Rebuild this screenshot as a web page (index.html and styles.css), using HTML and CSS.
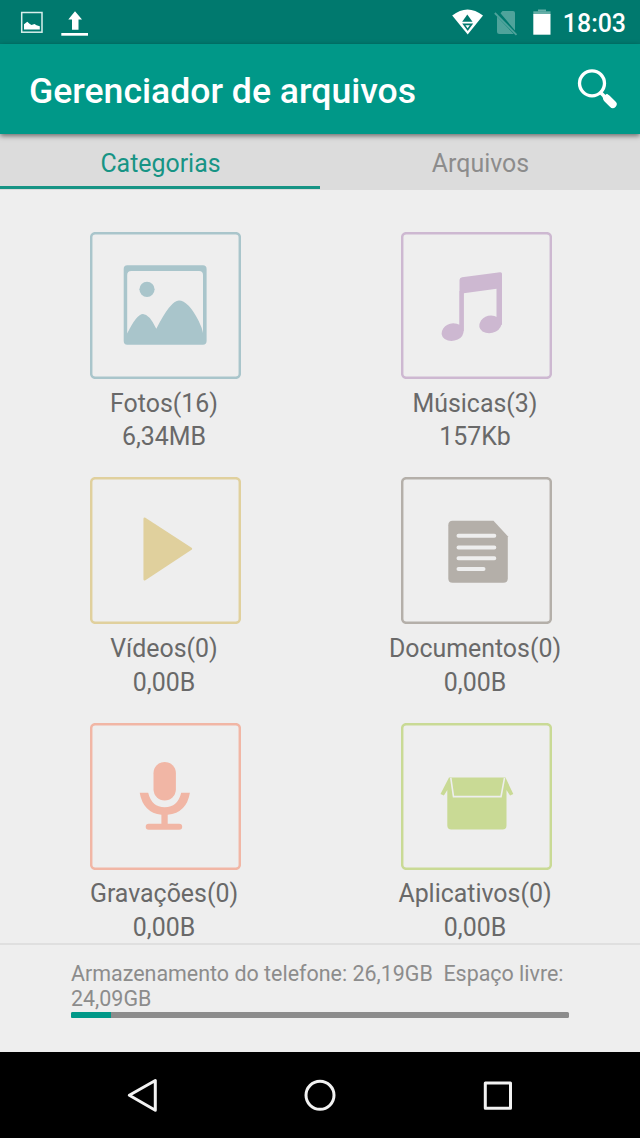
FILE: index.html
```html
<!DOCTYPE html>
<html lang="pt-BR">
<head>
<meta charset="utf-8">
<title>Gerenciador de arquivos</title>
<link rel="stylesheet" href="styles.css">
</head>
<body>
<div class="screen">
  <div class="status-bar">
    <svg class="status-icons" viewBox="0 0 100 44" width="100" height="44">
      <rect x="21.7" y="12.5" width="20.3" height="19.7" fill="none" stroke="#d9efec" stroke-width="1.5"/>
      <path d="M24 29.500v-5.300l3.300-2.400 2.200 2 2 1.200 3-1 2 1.200 3.300 1v3.300z" fill="#fff"/>
      <path d="M75 11.300l7 8.200h-3.500v10.300h-6.500v-10.300h-3.700z" fill="#fff"/>
      <path d="M61.300 33h26.700v2.700h-26.700z" fill="#fff"/>
    </svg>
    <div class="status-right">
      <svg viewBox="450 0 104 44" width="104" height="44">
        <path d="M452.200 15.500Q467.500 3.500 483 15.500L467.700 34.500z" fill="#fff"/>
        <path d="M467.300 14.500l5.200 7.200h-10.300z" fill="#00796e"/>
        <path d="M462.200 23.500h11l-5.500 7.500z" fill="#00796e"/>
        <path d="M465.400 25.200h4.400l-2.200 3z" fill="#fff"/>
        <path d="M500.500 13.300l2-2.300h10.500q2 0 2 2v17.500zM497 16.500l16.800 17.500h-14.300q-2.500 0-2.500-2.500z" fill="#4fa39b"/>
        <path d="M494.800 13L516.500 34.800" stroke="#4fa39b" stroke-width="1.800"/>
        <path d="M538 9.500h8v2h-8z" fill="#65aea7"/>
        <path d="M533.300 11.300h17.200v3.200h-17.200z" fill="#65aea7"/>
        <path d="M533.300 14h17.200v20.700h-17.200z" fill="#fff"/>
      </svg>
      <span class="clock">18:03</span>
    </div>
  </div>
  <header class="app-bar">
    <h1 class="title">Gerenciador de arquivos</h1>
    <svg viewBox="574 66 46 46" width="46" height="46">
      <circle cx="592" cy="83.300" r="12.500" fill="none" stroke="#fff" stroke-width="3.300"/>
      <path d="M600.500 92.500l4 4" stroke="#fff" stroke-width="3.500"/>
      <path d="M607 98.500l5.800 5.800" stroke="#fff" stroke-width="7.600" stroke-linecap="round"/>
      <path d="M602.500 97.500l4.500-3.800 9.500 9.800-4.800 4.500z" fill="#fff"/>
    </svg>
  </header>
  <nav class="tabs">
    <span class="tab tab-active">Categorias</span>
    <span class="tab">Arquivos</span>
  </nav>
  <main class="grid">
    <section class="item photos">
      <svg class="tile" viewBox="90.300 232 151 147">
        <rect class="frame" x="91.500" y="233.200" width="148.600" height="144.600" rx="4"/>
        <path fill-rule="evenodd" d="M127.500 265.300h75.700q3.700 0 3.700 3.700v72q0 3.700-3.700 3.700h-75.700q-3.500 0-3.500-3.700v-72q0-3.700 3.500-3.700zM131.500 271q-4 0-4 4v58.500Q137 314 143.300 314Q149.500 314 156.600 328.700Q171 300.500 179.200 300.500Q188.500 300.500 199 321Q202.500 328 203.300 333v-58q0-4-4-4z"/>
        <circle cx="147.300" cy="289.300" r="7.600"/>
      </svg>
      <p class="label">Fotos(16)</p><p class="label">6,34MB</p>
    </section>
    <section class="item music">
      <svg class="tile" viewBox="401.500 232 151 147">
        <rect class="frame" x="402.700" y="233.200" width="148.600" height="144.600" rx="4"/>
        <path d="M460 280q0-2.400 2.500-2.800l38-5q2-.2 2 1.500v51h-5.300v-36l-33 4.500v38h-4.200z"/>
        <path d="M460 291h4.200v39q0 7-6 9.500q-7 3-13-.5q-5.500-4.500-1.500-10.500q3.500-5 10-5.200q4 0 6.300 1.500z"/>
        <path d="M497.200 288h5.300v33q0 7-6 10.500q-7 3.500-13.500 0q-5.500-4.500-1.500-11q4-5 10-5q4 0 5.700 1.500z"/>
      </svg>
      <p class="label">Músicas(3)</p><p class="label">157Kb</p>
    </section>
    <section class="item videos">
      <svg class="tile" viewBox="90.300 477.300 151 147">
        <rect class="frame" x="91.500" y="478.500" width="148.600" height="144.600" rx="4"/>
        <path d="M145 519L191.200 549L145 579.500z" stroke="currentColor" stroke-width="2.500" stroke-linejoin="round"/>
      </svg>
      <p class="label">Vídeos(0)</p><p class="label">0,00B</p>
    </section>
    <section class="item documents">
      <svg class="tile" viewBox="401.500 477.300 151 147">
        <rect class="frame" x="402.700" y="478.500" width="148.600" height="144.600" rx="4"/>
        <path d="M453 521h41l14.300 15.500v42q0 4.500-4.500 4.500h-50.800q-4.200 0-4.200-4.500v-53q0-4.500 4.200-4.500z"/>
        <path class="lines" d="M459 536.100h35.800M459 547.900h35.800M459 558.600h35.800M459 569.400h25"/>
      </svg>
      <p class="label">Documentos(0)</p><p class="label">0,00B</p>
    </section>
    <section class="item recordings">
      <svg class="tile" viewBox="90.300 722.700 151 147">
        <rect class="frame" x="91.500" y="723.900" width="148.600" height="144.600" rx="4"/>
        <rect x="153.800" y="761.700" width="22.400" height="38.500" rx="11.200"/>
        <path d="M140 792.500h8.500Q152 807 165 807Q178 807 181.500 792.500h8.700Q187 812.500 168 814.500v9h11.500a2.900 2.900 0 010 6h-30.500a2.900 2.900 0 010-6h12.700v-9Q143.500 812.500 140 792.500z"/>
      </svg>
      <p class="label">Gravações(0)</p><p class="label">0,00B</p>
    </section>
    <section class="item apps">
      <svg class="tile" viewBox="401.500 722.700 151 147">
        <rect class="frame" x="402.700" y="723.900" width="148.600" height="144.600" rx="4"/>
        <path d="M449.500 777.300h56.500l7.800 16.500-3.200 1.500-3.600-5.500v35.500q0 4-4 4h-51.200q-4 0-4-4v-35.500l-3.400 5.500-3.400-1.500z"/>
        <path d="M451.300 777.500L454 796.300h47.500L505 777.500" fill="none" stroke="#eee" stroke-width="1.600"/>
      </svg>
      <p class="label">Aplicativos(0)</p><p class="label">0,00B</p>
    </section>
  </main>
  <footer class="storage">
    <p class="storage-text">Armazenamento do telefone: 26,19GB&nbsp; Espaço livre: 24,09GB</p>
    <div class="progress"><div class="progress-used" style="width:8.1%"></div></div>
  </footer>
  <div class="nav-bar">
    <svg viewBox="0 1052 640 86" width="640" height="86">
      <g fill="none" stroke="#f2f2f2" stroke-width="3" stroke-linejoin="round">
        <path d="M155.300 1080.500v29.700L129.300 1095.300z"/>
        <circle cx="320" cy="1095.300" r="14"/>
        <rect x="485.300" y="1083" width="25.200" height="25.200"/>
      </g>
    </svg>
  </div>
</div>
</body>
</html>
```
FILE: styles.css
```css
* { box-sizing: border-box; }
body { margin: 0; font-family: Roboto, "Noto Sans", sans-serif; background: #eee; }
h1, p { margin: 0; font-weight: 400; }
svg { display: block; flex: none; }

.screen { width: 640px; height: 1138px; display: flex; flex-direction: column; overflow: hidden; background: #eee; }

.status-bar { height: 44px; flex: none; display: flex; justify-content: space-between; background: #00796e; color: #fff; padding-right: 14px; }
.status-right { display: flex; gap: 9px; }
.clock { font-size: 24.900px; font-weight: 500; line-height: 47px; }

.app-bar { height: 89.500px; flex: none; display: flex; align-items: center; justify-content: space-between; padding: 0 20px 0 29px; background: #009888; box-shadow: 0 2px 5px rgba(0, 0, 0, .5); z-index: 1; }
.title { font-size: 35.600px; font-weight: 500; line-height: 42px; padding-top: 4px; color: #fff; white-space: nowrap; }

.tabs { height: 56.500px; flex: none; display: flex; background: #dcdcdc; }
.tab { flex: 1; height: 55px; padding-left: 1px; text-align: center; font-size: 24.900px; line-height: 60px; color: #8c8c8c; }
.tab-active { color: #179485; border-bottom: 3px solid #179485; }

.grid { flex: none; height: 753px; display: grid; grid-template-columns: 311px 311px; grid-auto-rows: 221.300px; row-gap: 24px; padding: 42px 9px 0; }
.item { display: flex; flex-direction: column; align-items: center; }
.tile { width: 151px; height: 147px; margin: 0 0 7.500px 2.500px; fill: currentColor; }
.frame { fill: none; stroke: currentColor; stroke-width: 2.500px; }
.lines { stroke: #eee; stroke-width: 4px; stroke-linecap: round; }
.label { font-size: 24.900px; line-height: 33.900px; margin-right: 1px; color: #696969; white-space: nowrap; }
.photos { color: #a9c5cb; }
.music { color: #cdb8d1; }
.videos { color: #e0d09d; }
.documents { color: #b4afa9; }
.recordings { color: #f1b6a5; }
.apps { color: #c9da95; }

.storage { flex: none; height: 109px; padding: 16px 68px 0 71px; border-top: 2px solid #dfdfdf; }
.storage-text { font-size: 21.450px; line-height: 25px; color: #8c8c8c; }
.progress { width: 498px; height: 5.500px; margin-top: 1px; border-radius: 1.500px; background: #8c8c8c; overflow: hidden; }
.progress-used { height: 100%; background: #009888; }

.nav-bar { height: 86px; flex: none; background: #000; }
```
